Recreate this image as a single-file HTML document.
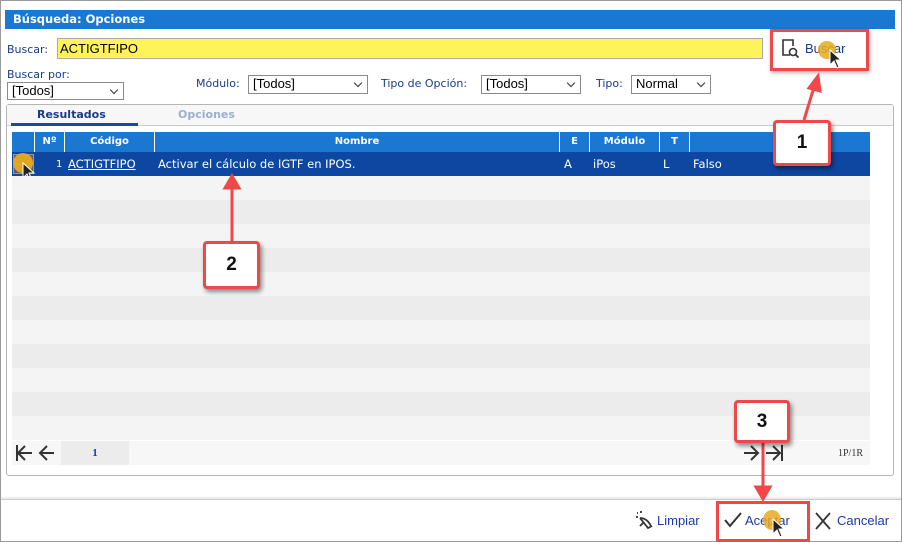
<!DOCTYPE html><html><head><meta charset="utf-8"><style>
*{box-sizing:border-box;margin:0;padding:0}
body{width:902px;height:542px;background:#fff;font-family:"DejaVu Sans","Liberation Sans",sans-serif;font-size:12px;position:relative;overflow:hidden}
.a{position:absolute}
.frame{left:0;top:0;width:902px;height:542px;border:1px solid #9a9a9a}
.title{left:5px;top:10px;width:890px;height:19px;background:#1a78d2;color:#fff;font-weight:bold;font-size:11.5px;padding:2px 8px}
.lbl{color:#1a3a8a;font-size:11px}
.sel{border:1px solid #8a8a8a;background:#fff;font-size:13px;padding:0 4px;color:#000;font-family:"Liberation Sans",sans-serif}
.sel:after{content:"";position:absolute;right:6px;top:4px;width:5px;height:5px;border-right:1.5px solid #333;border-bottom:1.5px solid #333;transform:rotate(45deg)}
.th{top:132px;height:20px;background:#1a78d2;color:#fff;font-weight:bold;font-size:10px;text-align:center;line-height:20px;border-right:1px solid #fff}
.row{left:12px;width:858px;height:24px}
.cell{color:#fff;font-size:11.5px;top:157px}
.box{background:#fff;border:3px solid #f04848;border-radius:4px;box-shadow:2px 3px 5px rgba(0,0,0,.45);font:bold 19px "Liberation Sans",sans-serif;text-align:center;color:#111}
.btn{font-size:13px;color:#1a3aa8;font-family:"Liberation Sans",sans-serif}
</style></head><body>
<div class="a frame"></div>
<div class="a title">Búsqueda: Opciones</div>
<div class="a lbl" style="left:7px;top:43px">Buscar:</div>
<div class="a" style="left:57px;top:38px;width:706px;height:21px;background:#fff35a;border:1px solid #aaa;font:13px 'Liberation Sans',sans-serif;padding:2px 2px">ACTIGTFIPO</div>
<div class="a" style="left:770px;top:29px;width:99px;height:42px;border:3px solid #f04848;box-shadow:1px 2px 4px rgba(0,0,0,.3)"></div>
<svg class="a" style="left:781px;top:38px" width="22" height="22"><path d="M9 17H2V2h10v6" fill="none" stroke="#333" stroke-width="1.6"/><circle cx="12" cy="14" r="3.5" fill="none" stroke="#333" stroke-width="1.6"/><path d="M14.5 16.5l3 3" stroke="#333" stroke-width="1.8"/></svg>
<div class="a btn" style="left:805px;top:41px;color:#1a3a8a">Buscar</div>
<div class="a" style="left:818px;top:41px;width:18px;height:18px;border-radius:50%;background:rgba(230,170,30,.85)"></div>
<svg class="a" style="left:829px;top:49px" width="14" height="22"><path d="M1 1v15l4-4 3 7 2-1-3-7h5z" fill="#222" stroke="#fff" stroke-width="1"/></svg>

<div class="a lbl" style="left:7px;top:68px">Buscar por:</div>
<div class="a sel" style="left:7px;top:82px;width:117px;height:18px">[Todos]</div>
<div class="a lbl" style="left:196px;top:77px">Módulo:</div>
<div class="a sel" style="left:248px;top:75px;width:120px;height:19px">[Todos]</div>
<div class="a lbl" style="left:381px;top:77px">Tipo de Opción:</div>
<div class="a sel" style="left:481px;top:75px;width:100px;height:19px">[Todos]</div>
<div class="a lbl" style="left:596px;top:77px">Tipo:</div>
<div class="a sel" style="left:631px;top:75px;width:80px;height:19px">Normal</div>

<div class="a" style="left:6px;top:104px;width:888px;height:372px;border:1px solid #b5b5b5;border-radius:3px"></div>
<div class="a" style="left:7px;top:105px;width:886px;height:21px;background:#f7f7f7;border-bottom:1px solid #ccc"></div>
<div class="a" style="left:37px;top:108px;font-weight:bold;font-size:11px;color:#1a3a8a">Resultados</div>
<div class="a" style="left:11px;top:123px;width:127px;height:3px;background:#1a4a9a"></div>
<div class="a" style="left:178px;top:108px;font-weight:bold;font-size:11px;color:#9ab0d0">Opciones</div>

<div class="a th" style="left:12px;width:23px"></div>
<div class="a th" style="left:35px;width:30px">Nº</div>
<div class="a th" style="left:65px;width:90px">Código</div>
<div class="a th" style="left:155px;width:405px">Nombre</div>
<div class="a th" style="left:560px;width:30px">E</div>
<div class="a th" style="left:590px;width:70px">Módulo</div>
<div class="a th" style="left:660px;width:30px">T</div>
<div class="a th" style="left:690px;width:180px;border:0">V</div>
<div class="a row" style="top:152px;background:#0d47a1"></div>
<div class="a" style="left:13px;top:154px;width:21px;height:20px;background:#5f5f5f;border:1px solid #999"></div>
<div class="a" style="left:13px;top:153px;width:20px;height:20px;border-radius:50%;background:rgba(230,170,30,.95)"></div>
<svg class="a" style="left:22px;top:162px" width="14" height="22"><path d="M1 1v15l4-4 3 7 2-1-3-7h5z" fill="#222" stroke="#fff" stroke-width="1"/></svg>
<div class="a cell" style="left:56px;font-size:10px;top:159px">1</div>
<div class="a cell" style="left:68px;text-decoration:underline">ACTIGTFIPO</div>
<div class="a cell" style="left:158px">Activar el cálculo de IGTF en IPOS.</div>
<div class="a cell" style="left:564px">A</div>
<div class="a cell" style="left:593px">iPos</div>
<div class="a cell" style="left:663px">L</div>
<div class="a cell" style="left:693px">Falso</div>
<div class="a row" style="top:176px;background:#f4f4f4"></div>
<div class="a row" style="top:200px;background:#ececec"></div>
<div class="a row" style="top:224px;background:#f4f4f4"></div>
<div class="a row" style="top:248px;background:#ececec"></div>
<div class="a row" style="top:272px;background:#f4f4f4"></div>
<div class="a row" style="top:296px;background:#ececec"></div>
<div class="a row" style="top:320px;background:#f4f4f4"></div>
<div class="a row" style="top:344px;background:#ececec"></div>
<div class="a row" style="top:368px;background:#f4f4f4"></div>
<div class="a row" style="top:392px;background:#ececec"></div>
<div class="a row" style="top:416px;background:#f4f4f4"></div>
<div class="a row" style="top:441px;background:#f7f7f7"></div>
<div class="a" style="left:61px;top:441px;width:68px;height:24px;background:#ececec;color:#1a3aa8;font:bold 11px 'Liberation Serif',serif;text-align:center;line-height:24px">1</div>
<svg class="a" style="left:14px;top:443px" width="46" height="20" fill="none" stroke="#333" stroke-width="2"><path d="M3 2v16M4 10h14M11 3l-7 7 7 7M26 10h14M33 3l-7 7 7 7"/></svg>
<svg class="a" style="left:742px;top:443px" width="46" height="20" fill="none" stroke="#333" stroke-width="2"><path d="M2 10h14M9 3l7 7-7 7M24 10h14M31 3l7 7-7 7M40 2v16"/></svg>
<div class="a" style="left:838px;top:448px;font:10px 'Liberation Serif',serif;color:#333">1P/1R</div>

<div class="a" style="left:1px;top:496px;width:900px;height:4px;background:linear-gradient(#fff,#ddd)"></div>
<div class="a" style="left:1px;top:499px;width:900px;height:1px;background:#ccc"></div>
<svg class="a" style="left:634px;top:510px" width="20" height="22" fill="none" stroke="#333" stroke-width="1.8"><path d="M3 3h1M7 1v2M2 7h2M6 8l8 10 4-2M6 8c4 0 8 2 11 8M10 12l-4 4"/></svg>
<div class="a btn" style="left:657px;top:513px">Limpiar</div>
<div class="a" style="left:716px;top:501px;width:94px;height:41px;border:3px solid #f04848"></div>
<svg class="a" style="left:724px;top:512px" width="18" height="16" fill="none" stroke="#333" stroke-width="2"><path d="M1 8l5 6L17 1"/></svg>
<div class="a btn" style="left:745px;top:513px">Aceptar</div>
<div class="a" style="left:763px;top:510px;width:18px;height:20px;border-radius:50%;background:rgba(230,170,30,.85)"></div>
<svg class="a" style="left:772px;top:518px" width="14" height="22"><path d="M1 1v15l4-4 3 7 2-1-3-7h5z" fill="#222" stroke="#fff" stroke-width="1"/></svg>
<svg class="a" style="left:815px;top:512px" width="16" height="18" fill="none" stroke="#333" stroke-width="1.8"><path d="M1 1l14 16M15 1L1 17"/></svg>
<div class="a btn" style="left:837px;top:513px">Cancelar</div>

<svg class="a" style="left:0;top:0" width="902" height="542"><g stroke="#f04848" stroke-width="3" fill="#f04848">
<path d="M804 120L815 84"/><path d="M818 76l-9 12 11 3z"/>
<path d="M232 241V186"/><path d="M232 176l-7 12h14z"/>
<path d="M763 443v45"/><path d="M763 499l-7-12h14z"/></g></svg>
<div class="a box" style="left:773px;top:120px;width:58px;height:46px;line-height:40px">1</div>
<div class="a box" style="left:203px;top:241px;width:57px;height:48px;line-height:42px">2</div>
<div class="a box" style="left:734px;top:400px;width:56px;height:43px;line-height:37px">3</div>
</body></html>
